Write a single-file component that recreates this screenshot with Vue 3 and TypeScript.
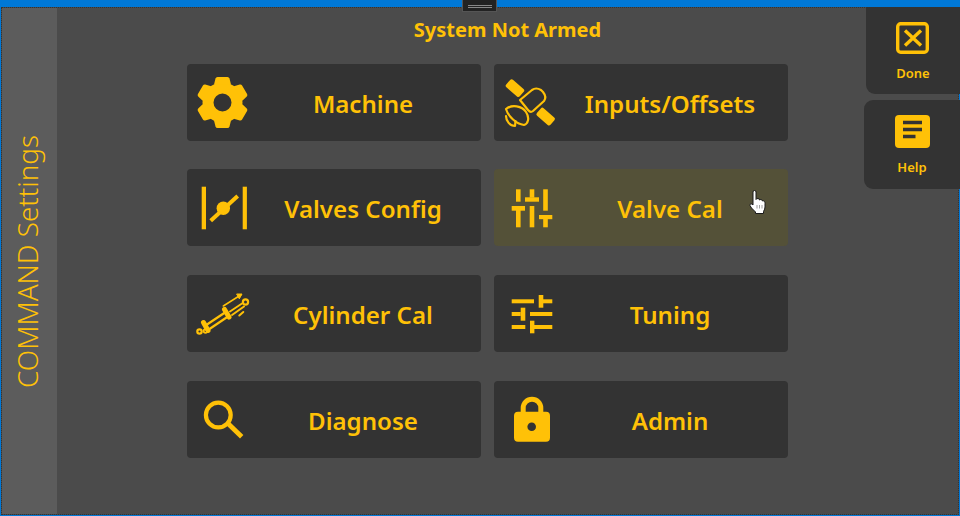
<template>
  <div class="window">
    <div class="handle"><span></span><span></span></div>
    <div class="frame">
      <aside class="sidebar"><span>COMMAND Settings</span></aside>
      <main class="main">
        <h1 class="status">System Not Armed</h1>
        <div class="grid">
          <button v-for="item in items" :key="item.key" class="tile" :class="{ hover: item.key === 'valvecal' }">
            <svg class="tile-icon" viewBox="0 0 58 77" width="58" height="77">
              <g v-if="item.key === 'machine'" transform="translate(35.5 38.5)">
                <circle r="14.500" fill="none" stroke="#ffc107" stroke-width="11" />
                <path v-for="a in [0, 60, 120, 180, 240, 300]" :key="a" :transform="`rotate(${a})`" d="M-8.500-18-7-24Q-6.500-25.500-5-25.500H5Q6.500-25.500 7-24L8.500-18Z" fill="#ffc107" />
              </g>
              <g v-else-if="item.key === 'inputs'">
                <rect x="12" y="19.500" width="18" height="10" rx="2" transform="rotate(41 21.500 24.250)" fill="#ffc107" />
                <rect x="42.500" y="47.500" width="18" height="10" rx="2" transform="rotate(41 51.500 52.750)" fill="#ffc107" />
                <g fill="none" stroke="#ffc107" stroke-width="2.200" stroke-linejoin="round" stroke-linecap="round">
                  <path d="M26 36 38 26Q42 23 47 26L49 28Q53 33 50 37L39 47Q36.500 49 34 46Z" />
                  <path d="M12 45C18 40 28 42 32 48 36 54 34 60 30 61 22 60 14 52 12 45Z" />
                  <path d="M12 52C12 57 16 62 21 62L21.500 57" />
                </g>
              </g>
              <g v-else-if="item.key === 'valves'" fill="#ffc107">
                <rect x="14.700" y="17.700" width="4.300" height="42.600" />
                <rect x="55.700" y="17.700" width="4.200" height="42.600" />
                <circle cx="36.300" cy="39.300" r="6.700" />
                <path d="M23.700 51.700 50.700 27" stroke="#ffc107" stroke-width="4" />
              </g>
              <g v-else-if="item.key === 'valvecal'" fill="#ffc107">
                <rect x="22" y="20.300" width="4.600" height="12.400" />
                <rect x="17.700" y="37" width="13.300" height="4.700" />
                <rect x="22" y="41" width="4.600" height="17.300" />
                <rect x="35.700" y="20.300" width="4.600" height="8.400" />
                <rect x="31" y="28.300" width="14" height="4.400" />
                <rect x="35.700" y="37" width="4.600" height="21.300" />
                <rect x="49.200" y="20.300" width="4.600" height="21.400" />
                <rect x="45" y="46" width="13.300" height="4.200" />
                <rect x="49.200" y="50" width="4.600" height="8.300" />
              </g>
              <g v-else-if="item.key === 'cylinder'" fill="none" stroke="#ffc107" stroke-linecap="round">
                <path d="M18.500 50.500 38 37.500M21 55 41 41.500" stroke-width="2.200" />
                <path d="M16.500 47.500 21 55.500" stroke-width="5" />
                <path d="M37.500 34.500 42 42" stroke-width="5" />
                <path d="M43 36.500 55 28.500M45 40 57 31.500" stroke-width="2" />
                <circle cx="58.500" cy="27" r="2.600" stroke-width="2.200" />
                <circle cx="12.500" cy="56.500" r="2.200" stroke-width="2.200" />
                <circle cx="18.500" cy="56" r="1.800" stroke-width="1.800" />
                <path d="M36.300 31 53.700 20" stroke-width="1.500" />
                <path d="M50 19 55 19 52.500 23.500Z" fill="#ffc107" stroke-width="1" />
                <path d="M52.300 40.500 56.300 37" stroke-width="2" />
              </g>
              <g v-else-if="item.key === 'tuning'" fill="#ffc107">
                <rect x="17.700" y="24.300" width="22.300" height="4" />
                <rect x="44.700" y="20" width="4.600" height="12.700" />
                <rect x="49" y="24.300" width="9.300" height="4" />
                <rect x="17.700" y="37" width="9" height="4" />
                <rect x="26.700" y="32.700" width="4.600" height="13" />
                <rect x="36" y="37" width="22.300" height="4" />
                <rect x="17.700" y="50" width="13.600" height="4" />
                <rect x="36" y="45.700" width="4.400" height="12.600" />
                <rect x="40" y="50" width="18.300" height="4" />
              </g>
              <g v-else-if="item.key === 'diagnose'" fill="none" stroke="#ffc107">
                <circle cx="31.300" cy="34" r="12.400" stroke-width="4.200" />
                <path d="M41 42.500 54.700 55.700" stroke-width="4.800" />
              </g>
              <g v-else-if="item.key === 'admin'">
                <path d="M29.200 31V27A8.800 8.800 0 0 1 46.800 27V31" fill="none" stroke="#ffc107" stroke-width="5" />
                <rect x="20" y="30.700" width="36" height="30" rx="4" fill="#ffc107" />
                <circle cx="37.700" cy="45.700" r="4.300" fill="#333" />
              </g>
            </svg>
            <span class="tile-label">{{ item.label }}</span>
          </button>
        </div>
        <div class="tab tab-done">
          <svg viewBox="0 0 34 32" width="34" height="32">
            <rect x="1.700" y="1.700" width="29.600" height="28.600" rx="3" fill="none" stroke="#ffc107" stroke-width="3.400" />
            <path d="M9 8.500 25 23.500M25 8.500 9 23.500" stroke="#ffc107" stroke-width="3.400" />
          </svg>
          <span>Done</span>
        </div>
        <div class="tab tab-help">
          <svg viewBox="0 0 35 33" width="35" height="33">
            <rect width="35" height="33" rx="4" fill="#ffc107" />
            <path d="M8 7.500H27M8 14.500H27M8 21.500H20.500" stroke="#333" stroke-width="3.600" />
          </svg>
          <span>Help</span>
        </div>
        <svg class="cursor" viewBox="0 0 18 26" width="19" height="26">
          <path d="M4.500 16V3Q4.500 1.500 6 1.500T7.500 3V10.500Q8 9.500 9.500 9.500T11 11Q11.500 10.500 12.500 10.500T14 12Q15 11.500 15.800 12.300T16.500 14.500V18Q16.500 20 15 22.500V24.500H7V23L3 19 1.500 16.500Q1 15 2.500 14.800 3.500 14.800 4.500 16Z" fill="#fff" stroke="#1a1a1a" stroke-width="1" stroke-linejoin="round" />
          <path d="M8.500 16V19.500M11 16V19.500M13.500 16V19.500" stroke="#777" stroke-width=".7" />
        </svg>
      </main>
    </div>
  </div>
</template>

<script setup lang="ts">
interface MenuItem {
  key: string
  label: string
}

const items: MenuItem[] = [
  { key: 'machine', label: 'Machine' },
  { key: 'inputs', label: 'Inputs/Offsets' },
  { key: 'valves', label: 'Valves Config' },
  { key: 'valvecal', label: 'Valve Cal' },
  { key: 'cylinder', label: 'Cylinder Cal' },
  { key: 'tuning', label: 'Tuning' },
  { key: 'diagnose', label: 'Diagnose' },
  { key: 'admin', label: 'Admin' },
]
</script>

<style>
html,
body {
  margin: 0;
  overflow: hidden;
}
</style>

<style scoped>
.window {
  position: relative;
  width: 960px;
  height: 516px;
  box-sizing: border-box;
  padding: 7px 1px 1px 1px;
  background: #0078d7;
  font-family: "Noto Sans", "Open Sans", sans-serif;
  color: #ffc107;
}

/* grab handle on the top edge */
.handle {
  position: absolute;
  top: 0;
  left: 462px;
  z-index: 2;
  width: 35px;
  height: 12px;
  box-sizing: border-box;
  padding-top: 5px;
  background: #222;
  border: 1px solid #555;
  border-top: none;
  display: flex;
  flex-direction: column;
  align-items: center;
  gap: 1px;
}

.handle span {
  width: 24px;
  height: 1px;
  background: #888;
}

.frame {
  height: 100%;
  box-sizing: border-box;
  display: flex;
  border: 1px dotted #333;
  background: #4b4b4b;
}

.sidebar {
  width: 55px;
  flex-shrink: 0;
  background: #5c5c5c;
  display: flex;
  align-items: center;
  justify-content: center;
}

.sidebar span {
  writing-mode: vertical-rl;
  transform: rotate(180deg);
  font-size: 27.800px;
  font-weight: 300;
  white-space: nowrap;
  margin: 1px 5px 0 0;
}

.main {
  flex: 1;
  display: flex;
  flex-direction: column;
  align-items: flex-start;
}

.status {
  align-self: center;
  margin: 9px 0 0;
  height: 46.800px;
  font-size: 20px;
  line-height: 26px;
  font-weight: 700;
}

.grid {
  margin-left: 130px;
  display: grid;
  grid-template-columns: 294px 294px;
  grid-auto-rows: 77px;
  column-gap: 13px;
  row-gap: 28.600px;
}

.tile {
  display: flex;
  align-items: center;
  padding: 0;
  border: none;
  border-radius: 4px;
  background: #333;
  color: inherit;
  font-family: inherit;
}

.tile.hover {
  background: #545138;
}

.tile-icon {
  flex-shrink: 0;
  overflow: visible;
}

.tile-label {
  flex: 1;
  padding-top: 2px;
  text-align: center;
  font-size: 24.100px;
  font-weight: 600;
  white-space: nowrap;
}

.tab {
  position: absolute;
  right: 0;
  display: flex;
  flex-direction: column;
  align-items: center;
  box-sizing: border-box;
  background: #333;
  font-size: 13px;
  font-weight: 600;
}

.tab-done {
  top: 7px;
  width: 94px;
  height: 87px;
  padding-top: 15px;
  gap: 10px;
  border-radius: 0 0 0 9px;
}

.tab-help {
  top: 100px;
  width: 96px;
  height: 89px;
  padding-top: 15px;
  gap: 10px;
  border-radius: 9px 0 0 9px;
}

.cursor {
  position: absolute;
  left: 748px;
  top: 189px;
}
</style>
